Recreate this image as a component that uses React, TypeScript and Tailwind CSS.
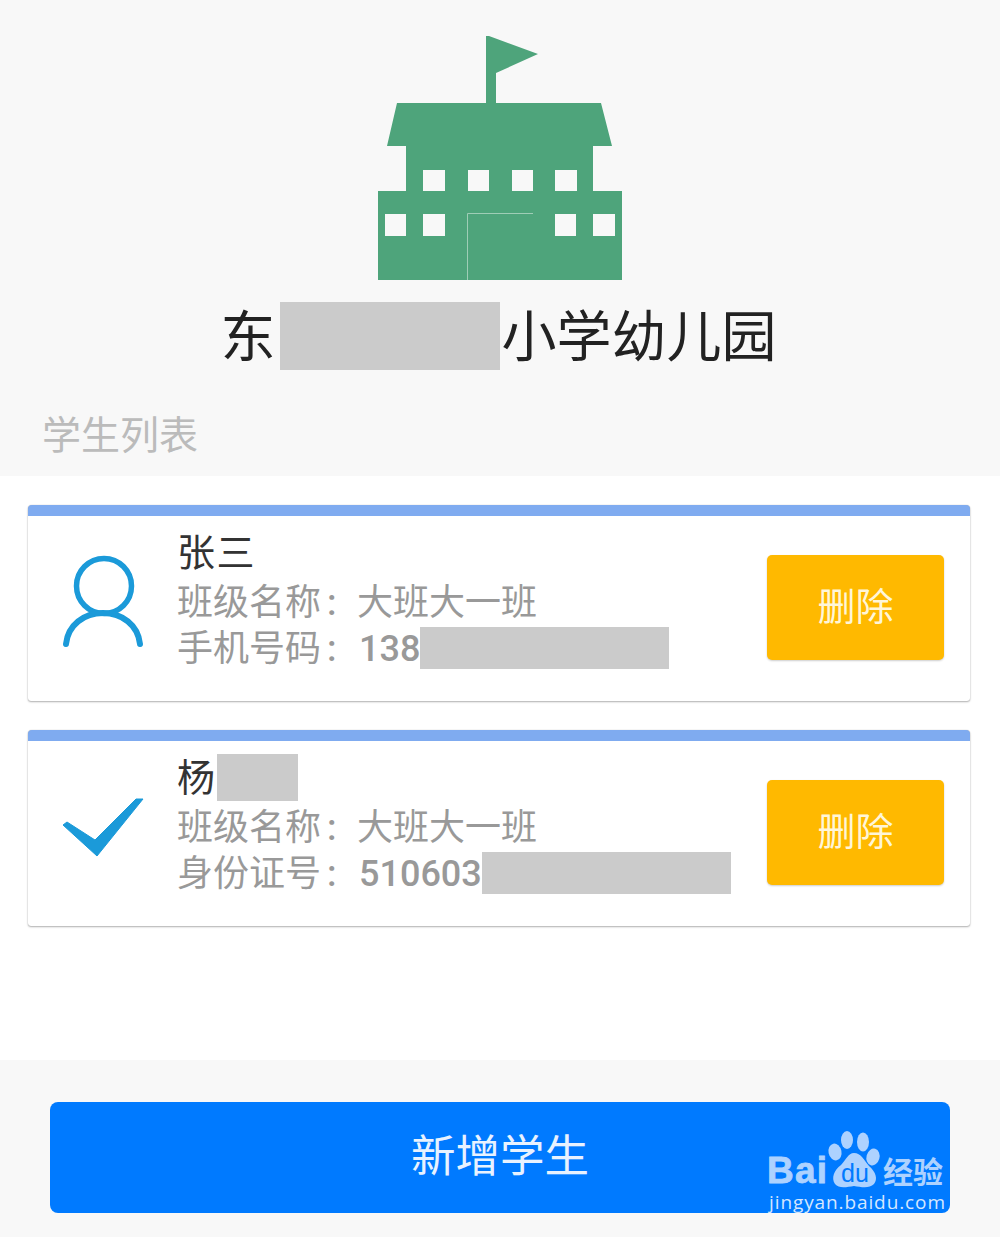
const CJK = "font-['Roboto','Noto_Sans_CJK_SC',sans-serif]";

function SchoolLogo() {
	return (
		<svg viewBox="0 0 244 244" className="mx-auto block h-[244px] w-[244px]">
			<path
				fill="#4ea47b"
				fillRule="evenodd"
				d="M108 0H111L160 18L118 37V67H223L234 110H215V155H244V244H0V155H28V110H9L19 67H108Z
				M45 134V155H67V134Z M90 134V155H111V134Z M134 134V155H155V134Z M177 134V155H199V134Z
				M7 178V200H28V178Z M45 178V200H67V178Z M177 178V200H198V178Z M215 178V200H237V178Z"
			/>
			<path d="M89.5 244V177.5H155" fill="none" stroke="#9fcdb6" strokeWidth="1" />
		</svg>
	);
}

function PersonIcon() {
	return (
		<svg viewBox="0 0 151 185" className="h-[185px] w-[151px] shrink-0">
			<circle cx="76" cy="70" r="27.5" fill="none" stroke="#1b9ad9" strokeWidth="5.5" />
			<path
				d="M38 128C40 109 56 97 75 97C94 97 110 109 112 128"
				fill="none"
				stroke="#1b9ad9"
				strokeWidth="6"
				strokeLinecap="round"
			/>
		</svg>
	);
}

function CheckIcon() {
	return (
		<svg viewBox="0 0 151 185" className="h-[185px] w-[151px] shrink-0">
			<path
				d="M35 84L39 81L67 99L108 58L115 58L69 115Z"
				fill="#1b9ad9"
				stroke="#1b9ad9"
				strokeWidth="1"
				strokeLinejoin="round"
			/>
		</svg>
	);
}

function Redacted({ className }: { className: string }) {
	return <span className={`inline-block bg-[#cbcbcb] ${className}`} />;
}

function Colon() {
	return <span className="inline-block w-[38px] pl-[6px] font-medium">:</span>;
}

interface StudentCardProps {
	icon: React.ReactNode;
	name: React.ReactNode;
	idLabel: string;
	idPrefix: string;
}

function StudentCard({ icon, name, idLabel, idPrefix }: StudentCardProps) {
	return (
		<div className="mr-[30px] ml-7 overflow-hidden rounded-t-[4px] rounded-b-[3px] border-t-[11px] border-[#7fabf0] bg-white shadow-[0_1px_2px_rgba(0,0,0,0.3),0_0_1px_rgba(0,0,0,0.25)]">
			<div className="flex h-[185px]">
				{icon}
				<div className="-ml-[2px] flex-1 pt-[13px]">
					<div className="flex h-12 items-center text-[38px] tracking-[1.5px] text-[#333]">{name}</div>
					<div className="mt-[2px] flex h-12 items-center whitespace-nowrap text-[36px] text-[#999]">
						班级名称
						<Colon />
						<span className="-ml-[2px]">大班大一班</span>
					</div>
					<div className="-mt-[2px] flex h-12 items-center whitespace-nowrap text-[36px] text-[#999]">
						{idLabel}
						<Colon />
						<span className="font-medium">{idPrefix}</span>
						<Redacted className="mb-[3px] h-[42px] w-[249px]" />
					</div>
				</div>
				<button className="mt-[39px] mr-[26px] h-[105px] w-[177px] shrink-0 rounded-[5px] bg-[#ffb900] text-[38px] text-[#fff6d8] shadow-[0_1px_2px_rgba(0,0,0,0.2)]">
					删除
				</button>
			</div>
		</div>
	);
}

function Watermark() {
	return (
		<svg viewBox="760 1125 190 95" className="absolute top-[23px] left-[710px] h-[95px] w-[190px]">
			<g fill="#add2ff">
				<ellipse cx="835" cy="1152" rx="6.5" ry="8.5" transform="rotate(-12 835 1152)" />
				<ellipse cx="847" cy="1140" rx="6" ry="9" />
				<ellipse cx="863" cy="1142" rx="6" ry="9.5" />
				<ellipse cx="873" cy="1157" rx="6.5" ry="8.5" transform="rotate(15 873 1157)" />
				<path d="M854 1153C861 1153 864 1160 869 1166C876 1172 878 1179 874 1184C869 1189 861 1187 854 1186C847 1187 839 1189 835 1184C831 1178 834 1170 841 1165C846 1160 848 1153 854 1153Z" />
				<text
					x="767"
					y="1183"
					stroke="#add2ff"
					strokeWidth="0.8"
					fontFamily="Liberation Sans"
					fontWeight="700"
					fontSize="37"
					textLength="60"
				>
					Bai
				</text>
				<text x="883" y="1183" fontFamily="Noto Sans CJK SC" fontWeight="700" fontSize="30">
					经验
				</text>
			</g>
			<text x="841" y="1182" fill="#007aff" fontFamily="Liberation Sans" fontSize="25" textLength="28">
				du
			</text>
			<text x="769" y="1209" fill="#d5e7ff" fontFamily="Open Sans" fontSize="19" textLength="176">
				jingyan.baidu.com
			</text>
		</svg>
	);
}

export default function App() {
	return (
		<div className={`min-h-[1237px] w-[1000px] bg-white ${CJK}`}>
			<div className="h-[476px] bg-[#f8f8f8] pt-9">
				<SchoolLogo />
				<div className="mt-[22px] flex h-[68px] items-center justify-center pt-[2px] pr-[3px] text-[55px] text-[#222]">
					东
					<Redacted className="mr-[2px] ml-[4px] -mt-[2px] h-[68px] w-[220px]" />
					小学幼儿园
				</div>
				<div className="mt-[42px] pl-[42px] text-[39px] leading-[48px] text-[#bbb]">学生列表</div>
			</div>

			<div className="flex h-[584px] flex-col gap-[29px] pt-[29px]">
				<StudentCard icon={<PersonIcon />} name="张三" idLabel="手机号码" idPrefix="138" />
				<StudentCard
					icon={<CheckIcon />}
					name={
						<>
							杨
							<Redacted className="mb-[1px] h-[47px] w-[81px]" />
						</>
					}
					idLabel="身份证号"
					idPrefix="510603"
				/>
			</div>

			<div className="h-[177px] bg-[#f8f8f8] px-[50px] pt-[42px]">
				<div className="relative flex h-[111px] items-center justify-center rounded-lg bg-[#007aff] text-[44.5px] text-[#e8f2ff]">
					新增学生
					<Watermark />
				</div>
			</div>
		</div>
	);
}
